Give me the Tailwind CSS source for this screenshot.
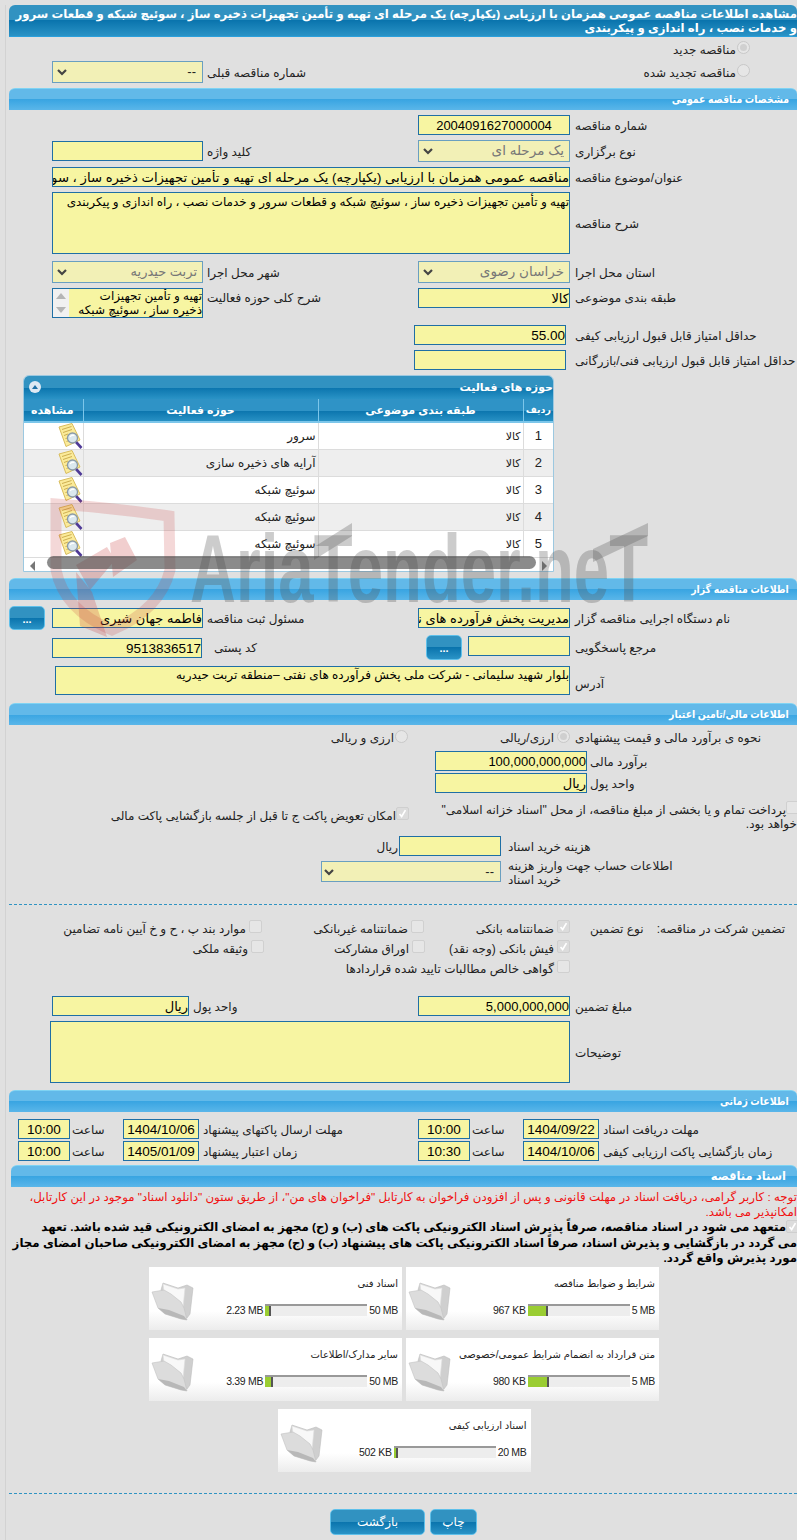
<!DOCTYPE html>
<html lang="fa" dir="rtl">
<head>
<meta charset="UTF-8" />
<meta name="viewport" content="width=device-width, initial-scale=1.0" />
<script src="https://cdn.jsdelivr.net/npm/@tailwindcss/browser@4"></script>
<title>مشاهده اطلاعات مناقصه</title>
</head>
<body class="bg-[#e0e0e0]">
<svg class="hidden">
	<symbol id="note" viewBox="0 0 26 26">
		<path d="M2 4 L15 0.5 L23 17 L9 23.5 Z" fill="#fbeb9a" stroke="#d8bc5c" stroke-width="1"/>
		<path d="M5 6.5 L14.5 3.5 M6 9.5 L15 6.5 M7 12.5 L11 11 M8.5 15.5 L10.5 15 M9.5 18.5 L12 17.5" stroke="#cdae50" stroke-width="1"/>
		<line x1="19" y1="19" x2="24.5" y2="25" stroke="#4f3a97" stroke-width="2.6"/>
		<circle cx="15.5" cy="15" r="5" fill="#dbe8ee" stroke="#8a9aa8" stroke-width="1.3"/>
		<path d="M13 14 Q14.5 11.5 17.5 12.5" stroke="#fff" stroke-width="1.3" fill="none"/>
	</symbol>
	<symbol id="folder" viewBox="0 0 44 42">
		<path d="M10 10 L12 3 L27 8 L36 5 L42 8 L39 34 L36 38 Z" fill="#cfcfcf" stroke="#bdbdbd" stroke-width=".6"/>
		<path d="M12 4 L27 9 L34 8 L32 28 L14 20 Z" fill="#f8f8f8" stroke="#dedede" stroke-width=".6"/>
		<path d="M1 12 L13 10 L20 14 L30 22 L33 28 L36 40 L30 39 L14 34 L7 28 Z" fill="#dcdcdc" stroke="#c2c2c2" stroke-width=".6"/>
		<path d="M7 28 L14 34 L30 39 L36 40 L33 36 L18 30 Z" fill="#b8b8b8"/>
	</symbol>
	<symbol id="chev" viewBox="0 0 10 7">
		<path d="M1 1 L5 5 L9 1" stroke="#444" stroke-width="2.2" fill="none"/>
	</symbol>
	<symbol id="tick" viewBox="0 0 13 13">
		<path d="M3 7 L5.5 10 L10 2.5" stroke="#fff" stroke-width="2" fill="none"/>
	</symbol>
</svg>

<div class="relative w-[797px] h-[1540px] overflow-hidden font-['Liberation_Sans','DejaVu_Sans',sans-serif] text-[12px] leading-[14px] text-[#222]">
	<div class="mr-0 ml-[5px] border-l border-[#d2d2d2] pl-[3px] h-full">

		<!-- title -->
		<div class="mt-[5px] h-[32px] rounded-t-[6px] border-b border-[#2aa0dc] bg-[linear-gradient(#3192c1_50%,#0a74ad_50%,#2a93c6)] text-white font-bold text-[11.7px] leading-[14px] whitespace-nowrap pt-[2px] overflow-hidden">
			مشاهده اطلاعات مناقصه عمومی همزمان با ارزیابی (یکپارچه) یک مرحله ای تهیه و تأمین تجهیزات ذخیره ساز ، سوئیچ شبکه و قطعات سرور<br />و خدمات نصب ، راه اندازی و پیکربندی
		</div>

		<div class="mt-[2px] h-[20px] flex items-center pr-[47px]">
			<span class="w-[13px] h-[13px] rounded-full border border-[#c8c8c8] bg-[#e6e6e6] flex items-center justify-center -mt-[3px]"><span class="w-[7px] h-[7px] rounded-full bg-[#d0d0d0]"></span></span>
			<span class="mr-[1px] pt-[2px]">مناقصه جدید</span>
		</div>
		<div class="mt-[2px] h-[22px] flex items-center">
			<div class="w-[379px] flex items-center pr-[47px]">
				<span class="w-[13px] h-[13px] rounded-full border border-[#c8c8c8] bg-[#e6e6e6] -mt-[3px]"></span>
				<span class="mr-[1px] pt-[2px]">مناقصه تجدید شده</span>
			</div>
			<div class="w-[211px] text-left pt-[2px]">شماره مناقصه قبلی</div>
			<div class="relative mr-[4px] w-[151px] h-[22px]">
				<select disabled class="appearance-none w-full h-full border border-[#6a9fc0] bg-[#f2f0b6] text-[#222] px-[6px] text-[13px]"><option>--</option></select>
				<svg class="absolute left-[5px] top-[8px] w-[10px] h-[7px]"><use href="#chev"/></svg>
			</div>
		</div>

		<!-- general -->
		<div class="mt-[5px] h-[22px] rounded-t-[6px] border-t border-[#7fd3f3] bg-[linear-gradient(#62b9e9_50%,#39a5e2_50%,#5ab6e9)] text-white font-bold text-[11px] leading-[20px] pr-[8px]"><span class="inline-block origin-right scale-x-[.85]">مشخصات مناقصه عمومی</span></div>

		<div class="mt-[5px] h-[20px] flex items-center">
			<div class="w-[222px] text-left pt-[2px]">شماره مناقصه</div>
			<input readonly value="2004091627000004" class="mr-[5px] w-[152px] h-[20px] border border-[#1f6fa5] bg-[#f7f5a2] text-center text-[13px] text-black" />
		</div>
		<div class="mt-[5px] h-[22px] flex items-center">
			<div class="w-[222px] text-left pt-[2px]">نوع برگزاری</div>
			<div class="relative mr-[5px] w-[152px] h-[22px]">
				<select disabled class="appearance-none w-full h-full border border-[#6a9fc0] bg-[#f2f0b6] text-[#777] px-[5px] text-[13.5px]"><option>یک مرحله ای</option></select>
				<svg class="absolute left-[5px] top-[8px] w-[10px] h-[7px]"><use href="#chev"/></svg>
			</div>
			<div class="w-[211px] text-left pt-[2px]">کلید واژه</div>
			<input readonly class="mr-[4px] w-[151px] h-[20px] border border-[#1f6fa5] bg-[#f7f5a2]" />
		</div>
		<div class="mt-[5px] h-[20px] flex items-center">
			<div class="w-[222px] text-left pt-[2px]">عنوان/موضوع مناقصه</div>
			<input readonly value="مناقصه عمومی همزمان با ارزیابی (یکپارچه) یک مرحله ای تهیه و تأمین تجهیزات ذخیره ساز ، سوئیچ شبکه و قطعات سرور و خدمات نصب ، راه اندازی و پیکربندی" class="mr-[5px] w-[518px] h-[20px] border border-[#1f6fa5] bg-[#f7f5a2] text-[13.2px] text-black" />
		</div>
		<div class="mt-[5px] h-[62px] flex items-center">
			<div class="w-[222px] text-left pt-[2px]">شرح مناقصه</div>
			<textarea readonly class="mr-[5px] w-[518px] h-[62px] border border-[#1f6fa5] bg-[#f7f5a2] text-[12px] leading-[14px] text-black resize-none overflow-hidden pt-[2px]">تهیه و تأمین تجهیزات ذخیره ساز ، سوئیچ شبکه و قطعات سرور و خدمات نصب ، راه اندازی و پیکربندی</textarea>
		</div>
		<div class="mt-[7px] h-[22px] flex items-center">
			<div class="w-[222px] text-left pt-[2px]">استان محل اجرا</div>
			<div class="relative mr-[5px] w-[152px] h-[22px]">
				<select disabled class="appearance-none w-full h-full border border-[#6a9fc0] bg-[#f2f0b6] text-[#777] px-[5px] text-[13.5px]"><option>خراسان رضوی</option></select>
				<svg class="absolute left-[5px] top-[8px] w-[10px] h-[7px]"><use href="#chev"/></svg>
			</div>
			<div class="w-[211px] text-left pt-[2px]">شهر محل اجرا</div>
			<div class="relative mr-[4px] w-[151px] h-[22px]">
				<select disabled class="appearance-none w-full h-full border border-[#6a9fc0] bg-[#f2f0b6] text-[#777] px-[5px] text-[13px]"><option>تربت حیدریه</option></select>
				<svg class="absolute left-[5px] top-[8px] w-[10px] h-[7px]"><use href="#chev"/></svg>
			</div>
		</div>
		<div class="mt-[5px] h-[30px] flex items-start">
			<div class="w-[222px] text-left pt-[3px]">طبقه بندی موضوعی</div>
			<input readonly value="کالا" class="mr-[5px] w-[152px] h-[20px] border border-[#1f6fa5] bg-[#f7f5a2] text-[13px] text-black" />
			<div class="w-[211px] text-left pt-[3px]">شرح کلی حوزه فعالیت</div>
			<div class="mr-[4px] w-[151px] h-[30px] border border-[#1f6fa5] flex">
				<div class="flex-1 bg-[#f7f5a2] text-[12px] leading-[14px] text-black overflow-hidden">تهیه و تأمین تجهیزات ذخیره ساز ، سوئیچ شبکه</div>
				<div class="w-[16px] bg-[#f1f1f1] flex flex-col items-center justify-between py-[4px]">
					<span class="w-0 h-0 border-x-[5px] border-x-transparent border-b-[6px] border-b-[#b5b5b5]"></span>
					<span class="w-0 h-0 border-x-[5px] border-x-transparent border-t-[6px] border-t-[#b5b5b5]"></span>
				</div>
			</div>
		</div>
		<div class="mt-[7px] h-[20px] flex items-center">
			<div class="w-[222px] text-left pt-[2px] whitespace-nowrap">حداقل امتیاز قابل قبول ارزیابی کیفی</div>
			<input readonly value="55.00" class="mr-[9px] w-[152px] h-[20px] border border-[#1f6fa5] bg-[#f7f5a2] text-[13.5px] text-black" />
		</div>
		<div class="mt-[5px] h-[20px] flex items-center">
			<div class="w-[222px] text-left pt-[2px] whitespace-nowrap">حداقل امتیاز قابل قبول ارزیابی فنی/بازرگانی</div>
			<input readonly class="mr-[9px] w-[152px] h-[20px] border border-[#1f6fa5] bg-[#f7f5a2]" />
		</div>

		<!-- activity table -->
		<div class="mt-[5px] mr-[243px] w-[531px] h-[197px] rounded-t-[6px] border border-[#9cc8e0] bg-white overflow-hidden">
			<div class="h-[23px] bg-[linear-gradient(#3192c1_50%,#0a74ad_50%,#2a93c6)] text-white font-bold text-[11px] leading-[22px] flex justify-between pl-[5px]">
				<span>حوزه های فعالیت</span>
				<span class="mt-[5px] w-[12px] h-[12px] rounded-full bg-[#dfe9f3] flex items-center justify-center"><span class="w-0 h-0 border-x-[3px] border-x-transparent border-b-[4px] border-b-[#1f6fa5]"></span></span>
			</div>
			<table class="w-full table-fixed border-collapse">
				<colgroup><col class="w-[30px]" /><col class="w-[205px]" /><col class="w-[235px]" /><col class="w-[61px]" /></colgroup>
				<thead class="bg-[linear-gradient(#2f93c6_50%,#0a74ad_50%,#2a93c6)] text-white font-bold text-[11px]">
					<tr class="h-[23px] border-b-2 border-[#7cc6ea]">
						<th class="border-l border-[#7cc6ea] font-bold text-[9.5px] whitespace-nowrap">ردیف</th>
						<th class="border-l border-[#7cc6ea] font-bold">طبقه بندی موضوعی</th>
						<th class="border-l border-[#7cc6ea] font-bold">حوزه فعالیت</th>
						<th class="font-bold">مشاهده</th>
					</tr>
				</thead>
				<tbody>
					<tr class="h-[27px] border-b border-[#dcdcdc]">
						<td class="border-l border-[#dcdcdc] text-center text-[13px]">1</td>
						<td class="border-l border-[#dcdcdc] pr-[2px] text-[11px]">کالا</td>
						<td class="border-l border-[#dcdcdc] pr-[2px]">سرور</td>
						<td><svg class="w-[26px] h-[26px]"><use href="#note"/></svg></td>
					</tr>
					<tr class="h-[27px] border-b border-[#dcdcdc] bg-[#eeeeee]">
						<td class="border-l border-[#dcdcdc] text-center text-[13px]">2</td>
						<td class="border-l border-[#dcdcdc] pr-[2px] text-[11px]">کالا</td>
						<td class="border-l border-[#dcdcdc] pr-[2px]">آرایه های ذخیره سازی</td>
						<td><svg class="w-[26px] h-[26px]"><use href="#note"/></svg></td>
					</tr>
					<tr class="h-[27px] border-b border-[#dcdcdc]">
						<td class="border-l border-[#dcdcdc] text-center text-[13px]">3</td>
						<td class="border-l border-[#dcdcdc] pr-[2px] text-[11px]">کالا</td>
						<td class="border-l border-[#dcdcdc] pr-[2px]">سوئیچ شبکه</td>
						<td><svg class="w-[26px] h-[26px]"><use href="#note"/></svg></td>
					</tr>
					<tr class="h-[27px] border-b border-[#dcdcdc] bg-[#eeeeee]">
						<td class="border-l border-[#dcdcdc] text-center text-[13px]">4</td>
						<td class="border-l border-[#dcdcdc] pr-[2px] text-[11px]">کالا</td>
						<td class="border-l border-[#dcdcdc] pr-[2px]">سوئیچ شبکه</td>
						<td><svg class="w-[26px] h-[26px]"><use href="#note"/></svg></td>
					</tr>
					<tr class="h-[27px] border-b border-[#dcdcdc]">
						<td class="border-l border-[#dcdcdc] text-center text-[13px]">5</td>
						<td class="border-l border-[#dcdcdc] pr-[2px] text-[11px]">کالا</td>
						<td class="border-l border-[#dcdcdc] pr-[2px]">سوئیچ شبکه</td>
						<td><svg class="w-[26px] h-[26px]"><use href="#note"/></svg></td>
					</tr>
				</tbody>
			</table>
			<div class="h-[15px] flex items-center justify-between px-[6px]">
				<span class="w-0 h-0 border-y-[5px] border-y-transparent border-l-[5px] border-l-[#777]"></span>
				<span class="w-0 h-0 border-y-[5px] border-y-transparent border-r-[5px] border-r-[#777]"></span>
			</div>
		</div>

		<!-- organizer -->
		<div class="mt-[6px] h-[22px] rounded-t-[6px] border-t border-[#7fd3f3] bg-[linear-gradient(#62b9e9_50%,#39a5e2_50%,#5ab6e9)] text-white font-bold text-[11px] leading-[20px] pr-[8px]"><span class="inline-block origin-right scale-x-[.85]">اطلاعات مناقصه گزار</span></div>
		<div class="mt-[6px] h-[24px] flex items-center">
			<div class="w-[222px] text-left pt-[2px]">نام دستگاه اجرایی مناقصه گزار</div>
			<input readonly value="مدیریت پخش فرآورده های نفتی" class="mr-[5px] w-[152px] h-[20px] border border-[#1f6fa5] bg-[#f7f5a2] text-[13px] text-black" />
			<div class="w-[211px] text-left pt-[2px]">مسئول ثبت مناقصه</div>
			<input readonly value="فاطمه جهان شیری" class="mr-[4px] w-[151px] h-[20px] border border-[#1f6fa5] bg-[#f7f5a2] text-[13px] text-black" />
			<button class="mr-[7px] w-[36px] h-[24px] rounded-[5px] border border-[#5fc0ea] bg-[linear-gradient(#3192c1_50%,#0a74ad_50%,#2a93c6)] text-white font-bold text-[11px] leading-[24px]">...</button>
		</div>
		<div class="mt-[5px] h-[25px] flex items-start">
			<div class="w-[222px] text-left pt-[6px]">مرجع پاسخگویی</div>
			<input readonly class="mt-[1px] mr-[5px] w-[102px] h-[20px] border border-[#1f6fa5] bg-[#f7f5a2]" />
			<button class="mr-[6px] w-[36px] h-[25px] rounded-[5px] border border-[#5fc0ea] bg-[linear-gradient(#3192c1_50%,#0a74ad_50%,#2a93c6)] text-white font-bold text-[11px] leading-[25px]">...</button>
			<div class="w-[216px] text-left pl-[4px] pt-[6px]">کد پستی</div>
			<input readonly value="9513836517" class="mt-[3px] mr-[8px] w-[150px] h-[20px] border border-[#1f6fa5] bg-[#f7f5a2] text-[13.5px] text-black" />
		</div>
		<div class="mt-[6px] h-[29px] flex items-center">
			<div class="w-[222px] text-left pt-[6px]">آدرس</div>
			<textarea readonly class="mr-[5px] w-[515px] h-[29px] border border-[#1f6fa5] bg-[#f7f5a2] text-[12px] leading-[14px] text-black resize-none overflow-hidden pt-[1px]">بلوار شهید سلیمانی - شرکت ملی پخش فرآورده های نفتی –منطقه تربت حیدریه</textarea>
		</div>

		<!-- finance -->
		<div class="mt-[8px] h-[22px] rounded-t-[6px] border-t border-[#7fd3f3] bg-[linear-gradient(#62b9e9_50%,#39a5e2_50%,#5ab6e9)] text-white font-bold text-[11px] leading-[20px] pr-[8px]"><span class="inline-block origin-right scale-x-[.85]">اطلاعات مالی/تامین اعتبار</span></div>
		<div class="mt-[3px] h-[18px] flex items-center">
			<div class="w-[222px] text-left pt-[2px]">نحوه ی برآورد مالی و قیمت پیشنهادی</div>
			<div class="mr-[5px] w-[162px] flex items-center">
				<span class="w-[13px] h-[13px] rounded-full border border-[#c8c8c8] bg-[#e6e6e6] flex items-center justify-center -mt-[2px]"><span class="w-[7px] h-[7px] rounded-full bg-[#cfcfcf]"></span></span>
				<span class="mr-[3px] pt-[2px]">ارزی/ریالی</span>
			</div>
			<div class="flex items-center">
				<span class="w-[13px] h-[13px] rounded-full border border-[#c8c8c8] bg-[#e6e6e6] -mt-[2px]"></span>
				<span class="mr-[1px] pt-[2px]">ارزی و ریالی</span>
			</div>
		</div>
		<div class="mt-[5px] h-[20px] flex items-center">
			<div class="w-[207px] text-left pt-[2px]">برآورد مالی</div>
			<input readonly value="100,000,000,000" class="mr-[3px] w-[152px] h-[20px] border border-[#1f6fa5] bg-[#f7f5a2] text-[13px] text-black" />
		</div>
		<div class="mt-[2px] h-[20px] flex items-center">
			<div class="w-[207px] text-left pt-[2px]">واحد پول</div>
			<input readonly value="ریال" class="mr-[3px] w-[152px] h-[20px] border border-[#1f6fa5] bg-[#f7f5a2] text-[13px] text-black" />
		</div>
		<div class="mt-[7px] h-[31px] flex items-start">
			<div class="w-[367px] pt-[3px]">
				<span class="inline-block w-[13px] h-[13px] rounded-[2px] border border-[#d0d0d0] bg-[#e6e6e6] -mr-[2px] ml-0 -translate-y-[3px] align-middle"></span>پرداخت تمام و یا بخشی از مبلغ مناقصه، از محل "اسناد خزانه اسلامی" خواهد بود.
			</div>
			<div class="mr-[21px] mt-[7px] flex items-start">
				<span class="w-[13px] h-[13px] rounded-[2px] border border-[#cfcfcf] bg-[#dcdcdc]"><svg class="w-[11px] h-[11px]"><use href="#tick"/></svg></span>
				<span class="mt-[2px] whitespace-nowrap">امکان تعویض پاکت ج تا قبل از جلسه بازگشایی پاکت مالی</span>
			</div>
		</div>
		<div class="mt-[5px] h-[20px] flex items-center">
			<div class="w-[289px] text-left pt-[2px]">هزینه خرید اسناد</div>
			<input readonly class="mr-[7px] w-[102px] h-[20px] border border-[#1f6fa5] bg-[#f7f5a2]" />
			<span class="mr-[1px] pt-[2px]">ریال</span>
		</div>
		<div class="mt-[3px] h-[28px] flex items-start">
			<div class="w-[289px] text-left whitespace-nowrap">اطلاعات حساب جهت واریز هزینه<br />خرید اسناد</div>
			<div class="relative mt-[2px] mr-[7px] w-[180px] h-[21px]">
				<select disabled class="appearance-none w-full h-full border border-[#6a9fc0] bg-[#f2f0b6] text-[#222] px-[6px] text-[13px]"><option>--</option></select>
				<svg class="absolute left-[3px] top-[8px] w-[10px] h-[7px]"><use href="#chev"/></svg>
			</div>
		</div>

		<div class="mt-[17px] border-t border-dashed border-[#2f93c2]"></div>

		<!-- guarantee -->
		<div class="mt-[15px] h-[20px] flex items-start">
			<div class="w-[222px] flex justify-between pr-[12px] pl-[15px] pt-[2px] whitespace-nowrap">
				<span>تضمین شرکت در مناقصه:</span><span>نوع تضمین</span>
			</div>
			<div class="mr-[5px] w-[146px] flex items-start">
				<span class="w-[13px] h-[13px] rounded-[2px] border border-[#cfcfcf] bg-[#dcdcdc]"><svg class="w-[11px] h-[11px]"><use href="#tick"/></svg></span>
				<span class="mr-[3px] mt-[2px] whitespace-nowrap">ضمانتنامه بانکی</span>
			</div>
			<div class="w-[162px] flex items-start">
				<span class="w-[13px] h-[13px] rounded-[2px] border border-[#d0d0d0] bg-[#e6e6e6]"></span>
				<span class="mr-[3px] mt-[2px] whitespace-nowrap">ضمانتنامه غیربانکی</span>
			</div>
			<div class="flex items-start">
				<span class="w-[13px] h-[13px] rounded-[2px] border border-[#d0d0d0] bg-[#e6e6e6]"></span>
				<span class="mr-[3px] mt-[2px] whitespace-nowrap">موارد بند پ ، ح و خ آیین نامه تضامین</span>
			</div>
		</div>
		<div class="h-[20px] flex items-start">
			<div class="w-[222px]"></div>
			<div class="mr-[5px] w-[145px] flex items-start">
				<span class="w-[13px] h-[13px] rounded-[2px] border border-[#cfcfcf] bg-[#dcdcdc]"><svg class="w-[11px] h-[11px]"><use href="#tick"/></svg></span>
				<span class="mr-[3px] mt-[2px] whitespace-nowrap">فیش بانکی (وجه نقد)</span>
			</div>
			<div class="w-[161px] flex items-start">
				<span class="w-[13px] h-[13px] rounded-[2px] border border-[#d0d0d0] bg-[#e6e6e6]"></span>
				<span class="mr-[3px] mt-[2px] whitespace-nowrap">اوراق مشارکت</span>
			</div>
			<div class="flex items-start">
				<span class="w-[13px] h-[13px] rounded-[2px] border border-[#d0d0d0] bg-[#e6e6e6]"></span>
				<span class="mr-[3px] mt-[2px] whitespace-nowrap">وثیقه ملکی</span>
			</div>
		</div>
		<div class="h-[20px] flex items-start">
			<div class="w-[222px]"></div>
			<div class="mr-[5px] flex items-start">
				<span class="w-[13px] h-[13px] rounded-[2px] border border-[#d0d0d0] bg-[#e6e6e6]"></span>
				<span class="mr-[3px] mt-[2px] whitespace-nowrap">گواهی خالص مطالبات تایید شده قراردادها</span>
			</div>
		</div>

		<div class="mt-[16px] h-[20px] flex items-center">
			<div class="w-[222px] text-left pt-[2px]">مبلغ تضمین</div>
			<input readonly value="5,000,000,000" class="mr-[5px] w-[152px] h-[20px] border border-[#1f6fa5] bg-[#f7f5a2] text-[13px] text-black" />
			<div class="w-[225px] text-left pt-[2px]">واحد پول</div>
			<input readonly value="ریال" class="mr-[4px] w-[137px] h-[20px] border border-[#1f6fa5] bg-[#f7f5a2] text-[13px] text-black" />
		</div>
		<div class="mt-[5px] h-[62px] flex items-center">
			<div class="w-[222px] text-left pt-[2px]">توضیحات</div>
			<textarea readonly class="mr-[5px] w-[520px] h-[62px] border border-[#1f6fa5] bg-[#f7f5a2] resize-none"></textarea>
		</div>

		<!-- dates -->
		<div class="mt-[7px] h-[22px] rounded-t-[6px] border-t border-[#7fd3f3] bg-[linear-gradient(#62b9e9_50%,#39a5e2_50%,#5ab6e9)] text-white font-bold text-[11px] leading-[20px] pr-[8px]"><span class="inline-block origin-right scale-x-[.85]">اطلاعات زمانی</span></div>
		<div class="mt-[7px] h-[20px] flex items-center">
			<div class="w-[194px] text-left pt-[2px]">مهلت دریافت اسناد</div>
			<input readonly value="1404/09/22" class="mr-[4px] w-[76px] h-[20px] border border-[#1f6fa5] bg-[#f7f5a2] text-center text-[13.5px] text-black" />
			<div class="w-[53px] text-left pl-[2px] pt-[2px]">ساعت</div>
			<input readonly value="10:00" class="w-[52px] h-[20px] border border-[#1f6fa5] bg-[#f7f5a2] text-center text-[13.5px] text-black" />
			<div class="w-[215px] text-left pt-[2px]">مهلت ارسال پاکتهای پیشنهاد</div>
			<input readonly value="1404/10/06" class="mr-[4px] w-[76px] h-[20px] border border-[#1f6fa5] bg-[#f7f5a2] text-center text-[13.5px] text-black" />
			<div class="w-[53px] text-left pl-[2px] pt-[2px]">ساعت</div>
			<input readonly value="10:00" class="w-[52px] h-[20px] border border-[#1f6fa5] bg-[#f7f5a2] text-center text-[13.5px] text-black" />
		</div>
		<div class="mt-[2px] h-[20px] flex items-center">
			<div class="w-[194px] text-left pt-[2px]">زمان بازگشایی پاکت ارزیابی کیفی</div>
			<input readonly value="1404/10/06" class="mr-[4px] w-[76px] h-[20px] border border-[#1f6fa5] bg-[#f7f5a2] text-center text-[13.5px] text-black" />
			<div class="w-[53px] text-left pl-[2px] pt-[2px]">ساعت</div>
			<input readonly value="10:30" class="w-[52px] h-[20px] border border-[#1f6fa5] bg-[#f7f5a2] text-center text-[13.5px] text-black" />
			<div class="w-[215px] text-left pt-[2px]">زمان اعتبار پیشنهاد</div>
			<input readonly value="1405/01/09" class="mr-[4px] w-[76px] h-[20px] border border-[#1f6fa5] bg-[#f7f5a2] text-center text-[13.5px] text-black" />
			<div class="w-[53px] text-left pl-[2px] pt-[2px]">ساعت</div>
			<input readonly value="10:00" class="w-[52px] h-[20px] border border-[#1f6fa5] bg-[#f7f5a2] text-center text-[13.5px] text-black" />
		</div>

		<!-- documents -->
		<div class="mt-[4px] ml-[2px] h-[22px] rounded-t-[6px] border-t border-[#7fd3f3] bg-[linear-gradient(#62b9e9_50%,#39a5e2_50%,#5ab6e9)] text-white font-bold text-[11.5px] leading-[20px] pr-[11px]">اسناد مناقصه</div>
		<div class="mt-[3px] text-[#f01010] text-[11.8px] leading-[15px] whitespace-nowrap">
			توجه : کاربر گرامی، دریافت اسناد در مهلت قانونی و پس از افزودن فراخوان به کارتابل "فراخوان های من"، از طریق ستون "دانلود اسناد" موجود در این کارتابل،<br />امکانپذیر می باشد.
		</div>
		<div class="font-bold text-black text-[11.8px] leading-[15.5px] whitespace-nowrap">
			<span class="inline-block w-[13px] h-[13px] rounded-[2px] border border-[#cfcfcf] bg-[#dcdcdc] -mr-[2px] align-top"><svg class="w-[11px] h-[11px]"><use href="#tick"/></svg></span>متعهد می شود در اسناد مناقصه، صرفاً پذیرش اسناد الکترونیکی پاکت های (ب) و (ج) مجهز به امضای الکترونیکی قید شده باشد. تعهد<br />می گردد در بازگشایی و پذیرش اسناد، صرفاً اسناد الکترونیکی پاکت های پیشنهاد (ب) و (ج) مجهز به امضای الکترونیکی صاحبان امضای مجاز<br />مورد پذیرش واقع گردد.
		</div>

		<div class="mr-[138px] w-[510px] flex flex-wrap justify-center gap-x-[4px] gap-y-[8px]">
			<div class="w-[253px] h-[63px] flex bg-[linear-gradient(#fff_70%,#ececec)] text-[10px]">
				<div class="flex-1 pr-[4px] pt-[10px]">
					<div class="h-[14px]">شرایط و ضوابط مناقصه</div>
					<div dir="ltr" class="mt-[13px] flex justify-end items-center gap-[2px] h-[12px] text-[10.5px] tracking-[-0.3px]">
						<span>967 KB</span>
						<div class="w-[102px] h-[12px] border-t-2 border-[#999] bg-[#ededed]"><div class="h-full bg-[#9acd32] border-r-2 border-[#555]" style="width:20px"></div></div>
						<span>5 MB</span>
					</div>
				</div>
				<svg class="w-[44px] h-[42px] mt-[13px] ml-[2px]"><use href="#folder"/></svg>
			</div>
			<div class="w-[253px] h-[63px] flex bg-[linear-gradient(#fff_70%,#ececec)] text-[10px]">
				<div class="flex-1 pr-[4px] pt-[10px]">
					<div class="h-[14px]">اسناد فنی</div>
					<div dir="ltr" class="mt-[13px] flex justify-end items-center gap-[2px] h-[12px] text-[10.5px] tracking-[-0.3px]">
						<span>2.23 MB</span>
						<div class="w-[102px] h-[12px] border-t-2 border-[#999] bg-[#ededed]"><div class="h-full bg-[#9acd32] border-r-2 border-[#555]" style="width:6px"></div></div>
						<span>50 MB</span>
					</div>
				</div>
				<svg class="w-[44px] h-[42px] mt-[13px] ml-[2px]"><use href="#folder"/></svg>
			</div>
			<div class="w-[253px] h-[63px] flex bg-[linear-gradient(#fff_70%,#ececec)] text-[10px]">
				<div class="flex-1 pr-[4px] pt-[10px]">
					<div class="h-[14px] whitespace-nowrap">متن قرارداد به انضمام شرایط عمومی/خصوصی</div>
					<div dir="ltr" class="mt-[13px] flex justify-end items-center gap-[2px] h-[12px] text-[10.5px] tracking-[-0.3px]">
						<span>980 KB</span>
						<div class="w-[102px] h-[12px] border-t-2 border-[#999] bg-[#ededed]"><div class="h-full bg-[#9acd32] border-r-2 border-[#555]" style="width:21px"></div></div>
						<span>5 MB</span>
					</div>
				</div>
				<svg class="w-[44px] h-[42px] mt-[13px] ml-[2px]"><use href="#folder"/></svg>
			</div>
			<div class="w-[253px] h-[63px] flex bg-[linear-gradient(#fff_70%,#ececec)] text-[10px]">
				<div class="flex-1 pr-[4px] pt-[10px]">
					<div class="h-[14px]">سایر مدارک/اطلاعات</div>
					<div dir="ltr" class="mt-[13px] flex justify-end items-center gap-[2px] h-[12px] text-[10.5px] tracking-[-0.3px]">
						<span>3.39 MB</span>
						<div class="w-[102px] h-[12px] border-t-2 border-[#999] bg-[#ededed]"><div class="h-full bg-[#9acd32] border-r-2 border-[#555]" style="width:8px"></div></div>
						<span>50 MB</span>
					</div>
				</div>
				<svg class="w-[44px] h-[42px] mt-[13px] ml-[2px]"><use href="#folder"/></svg>
			</div>
			<div class="w-[253px] h-[63px] flex bg-[linear-gradient(#fff_70%,#ececec)] text-[10px]">
				<div class="flex-1 pr-[4px] pt-[10px]">
					<div class="h-[14px]">اسناد ارزیابی کیفی</div>
					<div dir="ltr" class="mt-[13px] flex justify-end items-center gap-[2px] h-[12px] text-[10.5px] tracking-[-0.3px]">
						<span>502 KB</span>
						<div class="w-[102px] h-[12px] border-t-2 border-[#999] bg-[#ededed]"><div class="h-full bg-[#9acd32] border-r-2 border-[#555]" style="width:4px"></div></div>
						<span>20 MB</span>
					</div>
				</div>
				<svg class="w-[44px] h-[42px] mt-[13px] ml-[2px]"><use href="#folder"/></svg>
			</div>
		</div>

		<div class="mt-[21px] border-t border-dashed border-[#2f93c2]"></div>
		<div class="mt-[15px] mr-[320px] flex gap-[5px]">
			<button class="w-[47px] h-[26px] rounded-[5px] border border-[#5fc0ea] bg-[linear-gradient(#3192c1_50%,#0a74ad_50%,#2a93c6)] text-white text-[12px]">چاپ</button>
			<button class="w-[95px] h-[26px] rounded-[5px] border border-[#5fc0ea] bg-[linear-gradient(#3192c1_50%,#0a74ad_50%,#2a93c6)] text-white text-[12px]">بازگشت</button>
		</div>
	</div>

	<!-- watermark -->
	<svg class="absolute inset-0 w-[797px] h-[1540px] pointer-events-none" viewBox="0 0 797 1540">
		<path d="M56 504 Q115 508 169 516 L170 570 Q160 610 112 630 Q64 610 56 570 Z" fill="none" stroke="#c83c3c" stroke-opacity=".2" stroke-width="11"/>
		<path d="M76 565 L107 547 L115 560 L90 590 Z M110 543 L125 537 L137 560 L113 577 Z M76 572 L92 592 L107 637 L80 626 Z" fill="#c83c3c" fill-opacity=".25"/>
		<text direction="ltr" x="190" y="602" font-family="Liberation Sans" font-weight="700" font-size="96" textLength="458" lengthAdjust="spacingAndGlyphs" fill="#555" fill-opacity=".3">AriaTender.neT</text>
		<path d="M314 547 L352 523 L352 536 L314 560 Z M593 549 L648 523 L648 536 L593 562 Z" fill="#555" fill-opacity=".3"/>
		<rect x="47" y="556" width="489" height="13" rx="6.5" fill="#444" fill-opacity=".62"/>
	</svg>
</div>
</body>
</html>
